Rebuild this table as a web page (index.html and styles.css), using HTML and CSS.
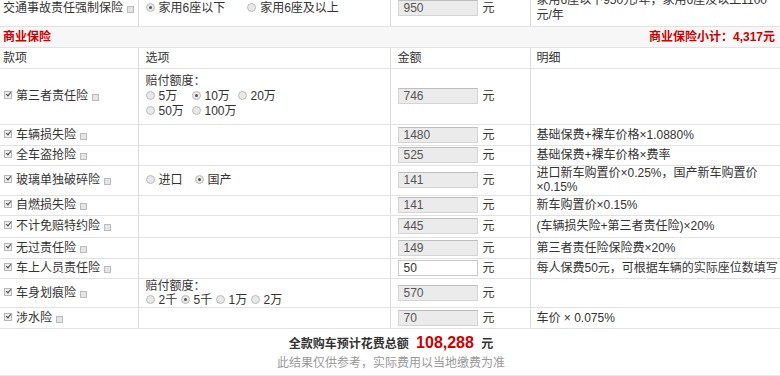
FILE: index.html
```html
<!DOCTYPE html>
<html lang="zh-CN">
<head>
<meta charset="utf-8">
<link rel="stylesheet" href="styles.css">
</head>
<body>
<div class="wrap">
<table class="ins">
  <colgroup><col class="c1"><col class="c2"><col class="c3"><col class="c4"></colgroup>
  <tr class="r0">
    <td class="name plain">交通事故责任强制保险<span class="q"></span></td>
    <td class="opt"><span class="radio on"></span>家用6座以下<span class="sp"></span><span class="radio"></span>家用6座及以上</td>
    <td class="amt"><span class="inp">950</span><span class="yuan">元</span></td>
    <td class="det two">家用6座以下950元/年，家用6座及以上1100元/年</td>
  </tr>
  <tr class="sec">
    <td colspan="2" class="red">商业保险</td>
    <td colspan="2" class="red right">商业保险小计：4,317元</td>
  </tr>
  <tr class="head">
    <td class="plain">款项</td><td class="opt">选项</td><td class="amt">金额</td><td class="det">明细</td>
  </tr>
  <tr class="tall">
    <td class="name"><span class="cb"></span>第三者责任险<span class="q"></span></td>
    <td class="opt three">赔付额度：<br><span class="rl"><span class="radio"></span>5万</span><span class="rl"><span class="radio on"></span>10万</span><span class="rl"><span class="radio"></span>20万</span><br><span class="rl"><span class="radio"></span>50万</span><span class="rl"><span class="radio"></span>100万</span></td>
    <td class="amt"><span class="inp">746</span><span class="yuan">元</span></td>
    <td class="det"></td>
  </tr>
  <tr class="h21">
    <td class="name"><span class="cb"></span>车辆损失险<span class="q"></span></td>
    <td class="opt"></td>
    <td class="amt"><span class="inp">1480</span><span class="yuan">元</span></td>
    <td class="det">基础保费+裸车价格×1.0880%</td>
  </tr>
  <tr>
    <td class="name"><span class="cb"></span>全车盗抢险<span class="q"></span></td>
    <td class="opt"></td>
    <td class="amt"><span class="inp">525</span><span class="yuan">元</span></td>
    <td class="det">基础保费+裸车价格×费率</td>
  </tr>
  <tr class="h30">
    <td class="name"><span class="cb"></span>玻璃单独破碎险<span class="q"></span></td>
    <td class="opt"><span class="radio"></span>进口<span class="sp2"></span><span class="radio on"></span>国产</td>
    <td class="amt"><span class="inp">141</span><span class="yuan">元</span></td>
    <td class="det two">进口新车购置价×0.25%，国产新车购置价×0.15%</td>
  </tr>
  <tr>
    <td class="name"><span class="cb"></span>自燃损失险<span class="q"></span></td>
    <td class="opt"></td>
    <td class="amt"><span class="inp">141</span><span class="yuan">元</span></td>
    <td class="det">新车购置价×0.15%</td>
  </tr>
  <tr class="h22">
    <td class="name"><span class="cb"></span>不计免赔特约险<span class="q"></span></td>
    <td class="opt"></td>
    <td class="amt"><span class="inp">445</span><span class="yuan">元</span></td>
    <td class="det">(车辆损失险+第三者责任险)×20%</td>
  </tr>
  <tr class="h21">
    <td class="name"><span class="cb"></span>无过责任险<span class="q"></span></td>
    <td class="opt"></td>
    <td class="amt"><span class="inp">149</span><span class="yuan">元</span></td>
    <td class="det">第三者责任险保险费×20%</td>
  </tr>
  <tr>
    <td class="name"><span class="cb"></span>车上人员责任险<span class="q"></span></td>
    <td class="opt"></td>
    <td class="amt"><span class="inp white">50</span><span class="yuan">元</span></td>
    <td class="det nowrap">每人保费50元，可根据车辆的实际座位数填写</td>
  </tr>
  <tr class="h29">
    <td class="name"><span class="cb"></span>车身划痕险<span class="q"></span></td>
    <td class="opt two">赔付额度：<br><span class="radio"></span>2千 <span class="radio on"></span>5千 <span class="radio"></span>1万 <span class="radio"></span>2万</td>
    <td class="amt"><span class="inp">570</span><span class="yuan">元</span></td>
    <td class="det"></td>
  </tr>
  <tr class="h21">
    <td class="name"><span class="cb"></span>涉水险<span class="q"></span></td>
    <td class="opt"></td>
    <td class="amt"><span class="inp">70</span><span class="yuan">元</span></td>
    <td class="det">车价 × 0.075%</td>
  </tr>
</table>
<div class="foot">
  <div class="total">全款购车预计花费总额 <span class="sum">108,288</span> 元</div>
  <div class="note">此结果仅供参考，实际费用以当地缴费为准</div>
</div>
</div>
</body>
</html>
```

FILE: styles.css
```css
html, body {
  margin: 0;
  padding: 0;
  background: #fff;
}
body {
  font-family: "Liberation Sans", Arial, "Noto Sans CJK SC", sans-serif;
  font-size: 12px;
  color: #333;
  width: 780px;
  height: 376px;
  overflow: hidden;
}
.wrap {
  margin-top: -9px;
}
.ins {
  width: 780px;
  border-collapse: collapse;
  table-layout: fixed;
}
.c1 { width: 138px; }
.c2 { width: 252px; }
.c3 { width: 140px; }
.c4 { width: 250px; }
.ins td {
  border-bottom: 1px solid #e2e2e2;
  border-left: 1px solid #dcdcdc;
  padding: 0 7px;
  line-height: 14px;
  height: 20px;
  box-sizing: border-box;
  vertical-align: middle;
  white-space: normal;
  overflow: hidden;
}
.ins td:first-child { border-left: none; }
.ins td.name { padding-left: 4px; white-space: nowrap; }
.ins td.plain { padding-left: 3px; white-space: nowrap; }
.ins td.det { padding-left: 6px; padding-right: 2px; }
.ins td.nowrap { white-space: nowrap; overflow: visible; }
.ins td.two { line-height: 15px; }
.ins td.opt.two { line-height: 14px; }
.ins td.three { line-height: 15px; padding-top: 5px; padding-bottom: 5px; }
.r0 td { height: 35px; }
.h21 td { height: 21px; }
.h22 td { height: 22px; }
.h29 td { height: 29px; }
.h30 td { height: 30px; }
.h30 td.two { line-height: 14px; }
.sec td {
  background: #f7f7f7;
  border-left: none;
  height: 21px;
  padding-left: 3px;
  padding-right: 5px;
}
.head td { height: 21px; }
.tall td { height: 56px; }
.red { color: #cc0000; font-weight: bold; }
.right { text-align: right; }
.cb {
  display: inline-block;
  width: 6px;
  height: 6px;
  border: 1px solid #b5b5b5;
  background: #eee;
  margin-right: 4px;
  vertical-align: 1px;
  position: relative;
}
.cb::after {
  content: "";
  position: absolute;
  left: 2px;
  top: -1px;
  width: 2px;
  height: 4px;
  border: solid #444;
  border-width: 0 1.5px 1.5px 0;
  transform: rotate(40deg);
}
.q {
  display: inline-block;
  width: 5px;
  height: 5px;
  border: 1px solid #bbb;
  background: #e4e4e4;
  margin-left: 4px;
  vertical-align: -1px;
}
.radio {
  display: inline-block;
  width: 7px;
  height: 7px;
  border: 1px solid #bbb;
  border-radius: 50%;
  background: #e8e8e8;
  margin-right: 4px;
  vertical-align: 0px;
  position: relative;
  box-sizing: content-box;
}
.radio.on::after {
  content: "";
  position: absolute;
  left: 2px;
  top: 2px;
  width: 3px;
  height: 3px;
  border-radius: 50%;
  background: #555;
}
.sp { display: inline-block; width: 22px; }
.sp2 { display: inline-block; width: 12px; }
.rl { display: inline-block; width: 46px; white-space: nowrap; }
.inp {
  display: inline-block;
  box-sizing: border-box;
  width: 80px;
  height: 16px;
  line-height: 14px;
  border: 1px solid #d4d4d4;
  border-top-color: #bdbdbd;
  background: #ebebeb;
  padding-left: 5px;
  color: #555;
  vertical-align: middle;
}
.inp.white { background: #fff; border-color: #c8c8c8; color: #333; }
.yuan { margin-left: 5px; vertical-align: middle; }
.foot {
  text-align: center;
  padding-top: 4px;
  border-bottom: 2px solid #e8e8e8;
  height: 42px;
  padding-left: 2px;
}
.total {
  font-weight: bold;
  line-height: 20px;
  color: #333;
}
.sum {
  color: #cc0000;
  font-size: 16px;
  margin: 0 4px;
}
.note {
  color: #999;
  line-height: 18px;
}
```
